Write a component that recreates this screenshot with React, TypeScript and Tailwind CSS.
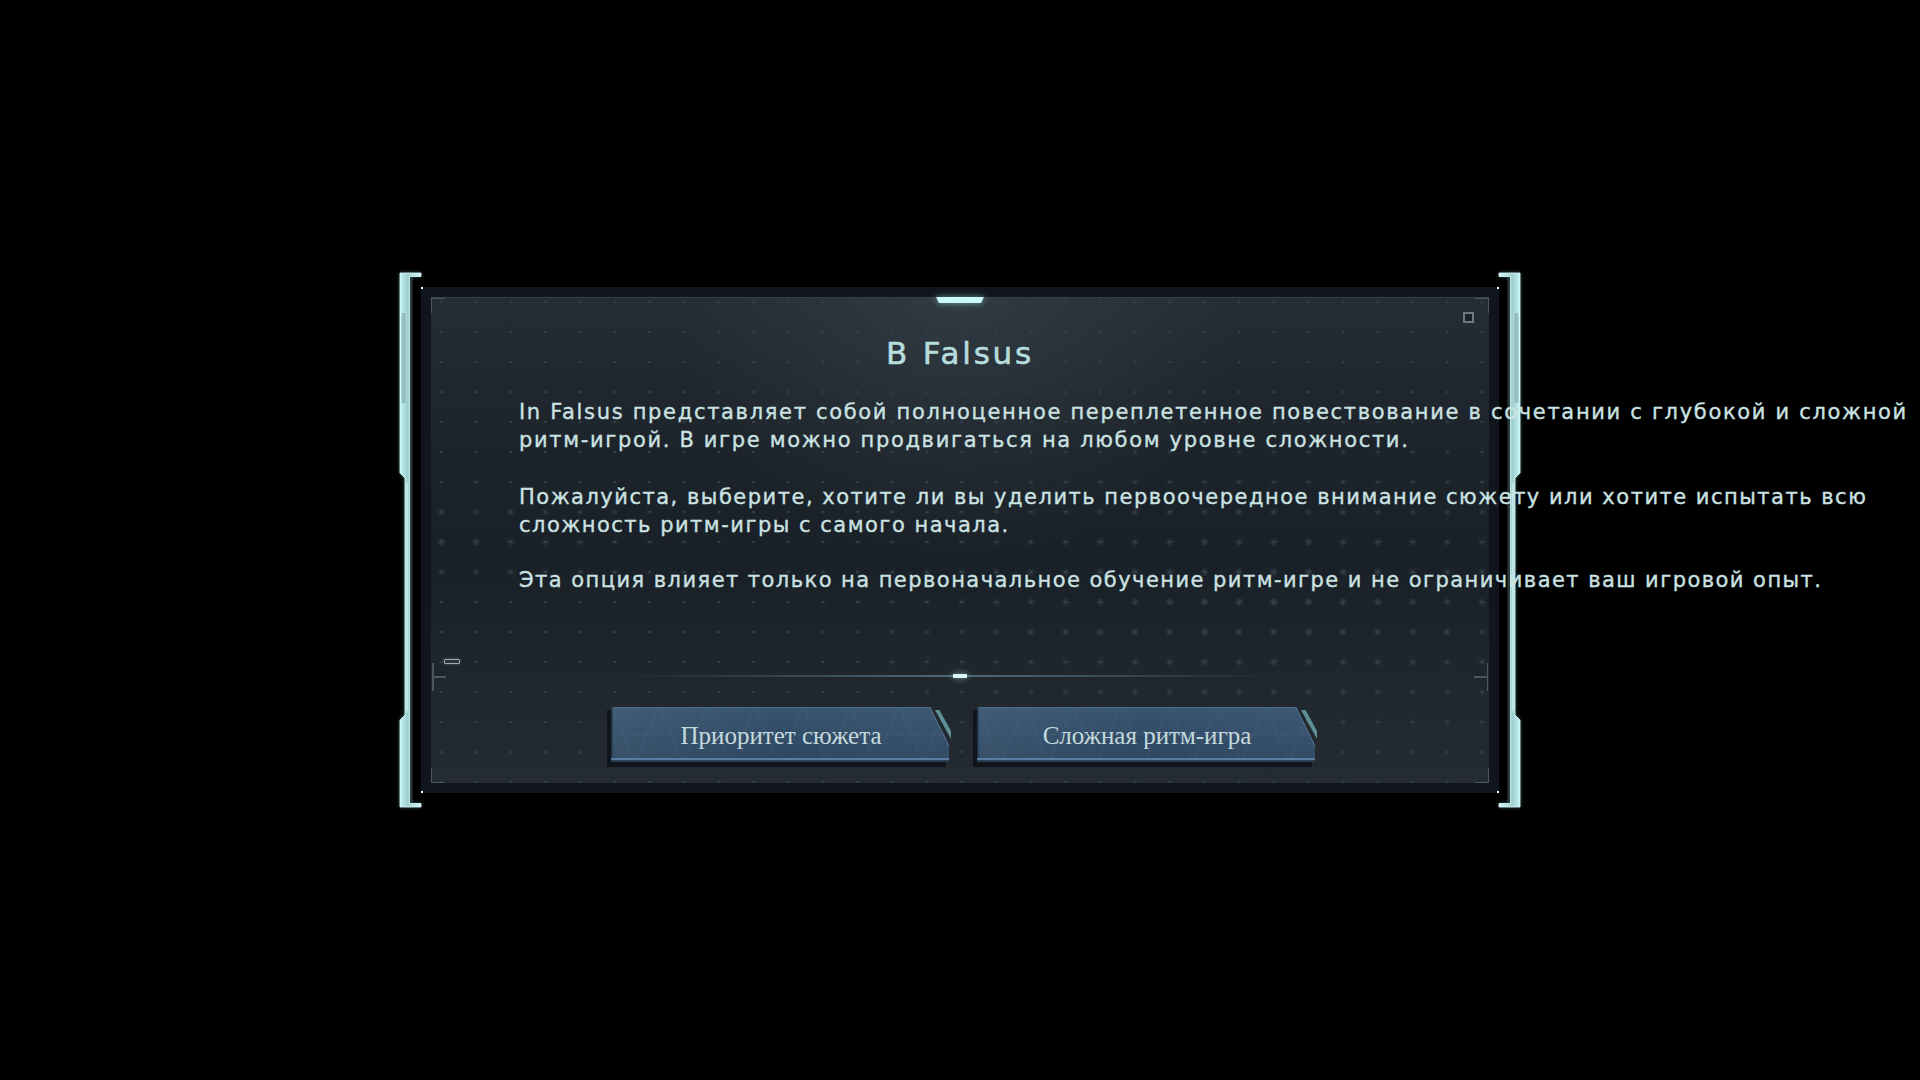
import React from "react";

function Bracket({ flip, id }: { flip?: boolean; id: string }) {
  const shape =
    "M0 0 H21 V3.5 H9.5 V530.5 H21 V534 H0 V447 L5 442 V205 L0 200 Z";
  return (
    <svg
      width="21"
      height="534"
      viewBox="0 0 21 534"
      className={flip ? "shrink-0 -scale-x-100 overflow-visible" : "shrink-0 overflow-visible"}
    >
      <defs>
        <filter id={`${id}-glow`} x="-100%" y="-5%" width="300%" height="110%">
          <feGaussianBlur stdDeviation="2" />
        </filter>
        <linearGradient id={`${id}-fill`} x1="0" y1="0" x2="1" y2="0">
          <stop offset="0" stopColor="#c9f6f6" />
          <stop offset="0.35" stopColor="#9fcfcf" />
          <stop offset="0.7" stopColor="#b6e6e6" />
          <stop offset="1" stopColor="#d2fafa" />
        </linearGradient>
      </defs>
      <path d={shape} fill="#8fe6e6" opacity="0.45" filter={`url(#${id}-glow)`} />
      <path d={shape} fill={`url(#${id}-fill)`} stroke="#dcffff" strokeWidth="0.8" />
      <rect x="1.5" y="40" width="4" height="90" fill="#7e9c9c" opacity="0.55" />
      <rect x="6.5" y="210" width="1.2" height="228" fill="#eaffff" opacity="0.7" />
      <rect x="10" y="4" width="2.5" height="526" fill="#2b3a3c" />
    </svg>
  );
}

function GameButton({ label, id }: { label: string; id: string }) {
  return (
    <button className="relative flex h-[55px] w-[340px] shrink-0 items-center justify-center">
      <svg
        className="absolute left-[-4px] top-0 overflow-visible"
        width="344"
        height="60"
        viewBox="-4 0 344 60"
      >
        <defs>
          <linearGradient id={`${id}-g`} x1="0" y1="0" x2="0" y2="1">
            <stop offset="0" stopColor="#37536f" />
            <stop offset="1" stopColor="#2d4660" />
          </linearGradient>
          <linearGradient id={`${id}-h`} x1="0" y1="0" x2="1" y2="0">
            <stop offset="0" stopColor="#ffffff" stopOpacity="0.05" />
            <stop offset="0.5" stopColor="#ffffff" stopOpacity="0" />
            <stop offset="1" stopColor="#ffffff" stopOpacity="0.03" />
          </linearGradient>
          <pattern id={`${id}-p`} width="48" height="55" patternUnits="userSpaceOnUse">
            <path d="M0 0 L24 55 L48 0 M0 27.5 H48" stroke="#7fa0c4" strokeWidth="0.8" fill="none" opacity="0.13" />
          </pattern>
          <pattern id={`${id}-d`} width="4" height="4" patternUnits="userSpaceOnUse">
            <rect width="1" height="1" fill="#8fb0d0" opacity="0.08" />
          </pattern>
        </defs>
        <polygon points="-4,3 316,3 335,43 335,60 -4,60" fill="#0d1318" opacity="0.9" />
        <polygon points="0,0 319,0 338,39 338,55 0,55" fill={`url(#${id}-g)`} />
        <polygon points="0,0 319,0 338,39 338,55 0,55" fill={`url(#${id}-p)`} />
        <polygon points="0,0 319,0 338,39 338,55 0,55" fill={`url(#${id}-d)`} />
        <polygon points="0,0 319,0 338,39 338,55 0,55" fill={`url(#${id}-h)`} />
        <polyline points="0,0.6 319,0.6 338,39" fill="none" stroke="#4c6b8b" strokeWidth="1.2" />
        <rect x="0" y="0" width="1.6" height="55" fill="#23354a" />
        <rect x="0" y="51" width="338" height="2.2" fill="#587ca2" />
        <rect x="0" y="53.2" width="338" height="1.8" fill="#2a3e54" />
        <polygon points="324,3 328.5,3 340,24 340,32" fill="#5d8f95" />
      </svg>
      <span className="relative mt-[1px] font-['Liberation_Serif',serif] text-[25px] leading-none text-[#c4dadd]">
        {label}
      </span>
    </button>
  );
}

function Corner({ pos }: { pos: "tl" | "tr" | "bl" | "br" }) {
  const map: Record<string, string> = {
    tl: "left-0 top-0 border-l-[1.5px] border-t-[1.5px]",
    tr: "right-0 top-0 border-r-[1.5px] border-t-[1.5px]",
    bl: "left-0 bottom-0 border-l-[1.5px] border-b-[1.5px]",
    br: "right-0 bottom-0 border-r-[1.5px] border-b-[1.5px]",
  };
  return <div className={`absolute h-[15px] w-[14px] border-[#4a5761] ${map[pos]}`} />;
}

export default function App() {
  return (
    <div className="flex h-[1080px] w-[1920px] items-center justify-center overflow-hidden bg-black font-['DejaVu_Sans',sans-serif]">
      <div className="flex items-center">
        <Bracket id="bl" />
        <div className="relative h-[506px] w-[1078px] shrink-0 bg-[#10161c] p-[10px]">
          {/* outer corner pixels */}
          <div className="absolute left-0 top-0 h-[2px] w-[2px] bg-[#e6ffff]" />
          <div className="absolute right-0 top-0 h-[2px] w-[2px] bg-[#e6ffff]" />
          <div className="absolute bottom-0 left-0 h-[2px] w-[2px] bg-[#e6ffff]" />
          <div className="absolute bottom-0 right-0 h-[2px] w-[2px] bg-[#e6ffff]" />

          <div className="relative flex h-full flex-col border-t border-[#333f49] bg-[linear-gradient(180deg,#252c34_0%,#1d232a_32%,#1a2027_55%,#1e252b_74%,#242c31_100%)]">
            {/* top glow */}
            <div className="pointer-events-none absolute inset-0 bg-[radial-gradient(ellipse_at_50%_0%,rgba(130,160,170,0.13),transparent_38%)]" />
            {/* small dot grid */}
            <div className="pointer-events-none absolute inset-0 bg-[radial-gradient(circle,#333f49_1px,transparent_1.6px)] bg-[length:34.7px_30px] bg-[position:-7px_-11px]" />
            {/* halftone larger dots */}
            <div className="pointer-events-none absolute inset-0 bg-[radial-gradient(circle,rgba(70,86,98,0.35)_3px,transparent_4.5px)] bg-[length:34.7px_30px] bg-[position:-7px_-11px] [mask-image:radial-gradient(ellipse_at_78%_62%,black_0%,transparent_45%)]" />
            <div className="pointer-events-none absolute inset-0 bg-[radial-gradient(circle,rgba(70,86,98,0.3)_3px,transparent_4.5px)] bg-[length:34.7px_30px] bg-[position:-7px_-11px] [mask-image:radial-gradient(ellipse_at_0%_50%,black_0%,transparent_22%)]" />

            {/* top light */}
            <svg className="absolute left-1/2 top-[-1px] -translate-x-1/2 overflow-visible" width="48" height="6" viewBox="0 0 48 6">
              <defs>
                <filter id="tl-glow" x="-50%" y="-200%" width="200%" height="500%">
                  <feGaussianBlur stdDeviation="3" />
                </filter>
              </defs>
              <polygon points="0,0 48,0 45,6 3,6" fill="#9ff0f0" opacity="0.6" filter="url(#tl-glow)" />
              <polygon points="0,0 48,0 45,6 3,6" fill="#c9fbfb" />
            </svg>

            {/* corner marks */}
            <Corner pos="tl" />
            <Corner pos="tr" />
            <Corner pos="bl" />
            <Corner pos="br" />
            <div className="absolute right-[15px] top-[14px] h-[11px] w-[11px] border-2 border-[#6e7a82] bg-[#1b2128]" />

            {/* side ticks */}
            <div className="absolute left-[1px] top-[365px] h-[28px] w-[14px]">
              <div className="absolute left-0 top-0 h-full w-[1.5px] bg-[#4a5761]" />
              <div className="absolute left-0 top-[13px] h-[1.5px] w-[14px] bg-[#4a5761]" />
            </div>
            <div className="absolute right-[1px] top-[365px] h-[28px] w-[14px]">
              <div className="absolute right-0 top-0 h-full w-[1.5px] bg-[#4a5761]" />
              <div className="absolute right-0 top-[13px] h-[1.5px] w-[14px] bg-[#4a5761]" />
            </div>
            <div className="absolute left-[13px] top-[361px] h-[5px] w-[16px] rounded-[1px] border border-[#9aabb2] bg-[#2a343b] shadow-[0_0_3px_rgba(160,200,210,0.4)]" />

            {/* title */}
            <h1 className="relative pt-[37px] text-center text-[31px] leading-[36px] tracking-[2.8px] text-[#b6dcdc] [-webkit-text-stroke:0.6px_#b6dcdc]">
              B Falsus
            </h1>

            {/* body */}
            <div className="relative z-10 mt-[27px] whitespace-nowrap pl-[88px] text-[21px] leading-[28.2px] tracking-[1.6px] text-[#cbe2e2] [-webkit-text-stroke:0.35px_#cbe2e2]">
              <p className="tracking-[1.68px]">
                In Falsus представляет собой полноценное переплетенное повествование в сочетании с глубокой и сложной
                <br />
                <span className="tracking-[1.66px]">ритм-игрой. В игре можно продвигаться на любом уровне сложности.</span>
              </p>
              <p className="mt-[28.5px] tracking-[1.5px]">
                Пожалуйста, выберите, хотите ли вы уделить первоочередное внимание сюжету или хотите испытать всю
                <br />
                сложность ритм-игры с самого начала.
              </p>
              <p className="mt-[27px] tracking-[1.45px]">
                Эта опция влияет только на первоначальное обучение ритм-игре и не ограничивает ваш игровой опыт.
              </p>
            </div>

            <div className="flex-1" />

            {/* divider */}
            <div className="relative h-[2px] bg-[linear-gradient(90deg,transparent_18%,#3d4f5b_38%,#52697a_50%,#3d4f5b_62%,transparent_80%)]">
              <div className="absolute left-1/2 top-[-1px] h-[4px] w-[14px] -translate-x-1/2 bg-[#dcf6f6] shadow-[0_0_6px_rgba(170,230,235,0.7)]" />
            </div>

            {/* buttons */}
            <div className="mb-[21px] mt-[30px] flex justify-center gap-[26px] pl-[8px]">
              <GameButton id="b1" label="Приоритет сюжета" />
              <GameButton id="b2" label="Сложная ритм-игра" />
            </div>
          </div>
        </div>
        <Bracket id="br" flip />
      </div>
    </div>
  );
}
